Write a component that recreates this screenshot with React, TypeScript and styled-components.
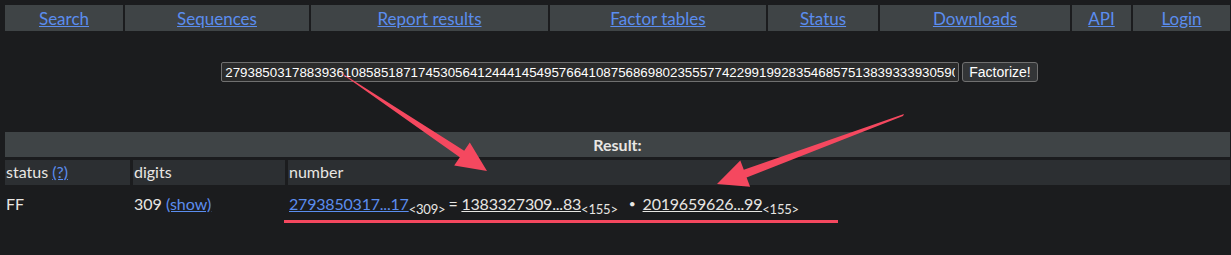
import styled, { createGlobalStyle } from "styled-components";

const Global = createGlobalStyle`
  html, body {
    margin: 0;
    background: #1b1c1e;
    color: #e8e6e3;
    font-family: Lato, "Noto Sans", sans-serif;
    font-size: 16px;
  }
`;

const Page = styled.div`
  position: relative;
  width: 1231px;
  height: 255px;
  padding: 5px 1px 0 5px;
  box-sizing: border-box;
`;

const Nav = styled.nav`
  display: grid;
  grid-template-columns: 118px 184px 237px 216px 110px 190px 59px 97px;
  column-gap: 2px;
  height: 26px;
  font-size: 17px;
`;

const NavCell = styled.div`
  background: #3f4446;
  display: flex;
  align-items: center;
  justify-content: center;
`;

const Link = styled.a<{ $plain?: boolean }>`
  color: ${(p) => (p.$plain ? "#e8e6e3" : "#5b8def")};
  text-decoration: underline;
  cursor: pointer;
`;

const Form = styled.form`
  display: flex;
  justify-content: center;
  align-items: center;
  gap: 3px;
  margin-top: 31px;
  padding-left: 24px;
`;

const NumberInput = styled.input`
  width: 738px;
  height: 20px;
  box-sizing: border-box;
  background: #2b2b2b;
  border: 1px solid #707070;
  border-radius: 2px;
  color: #fff;
  font-family: "Liberation Sans", Arial, sans-serif;
  font-size: 13.33px;
  padding: 0 3px;
  outline: none;
`;

const Button = styled.button`
  height: 20px;
  box-sizing: border-box;
  background: #333537;
  border: 1px solid #707070;
  border-radius: 3px;
  color: #fff;
  font-family: "Liberation Sans", Arial, sans-serif;
  font-size: 14px;
  padding: 0 6px;
`;

const Result = styled.div`
  margin-top: 50px;
  display: flex;
  flex-direction: column;
  gap: 3px;
`;

const Title = styled.div`
  background: #3f4446;
  height: 25px;
  display: flex;
  align-items: center;
  justify-content: center;
  font-weight: bold;
`;

const Row = styled.div`
  display: grid;
  grid-template-columns: 125px 152px 1fr;
  column-gap: 3px;
  height: 25px;
`;

const Cell = styled.div<{ $head?: boolean }>`
  background: ${(p) => (p.$head ? "#2c2f32" : "transparent")};
  display: flex;
  align-items: center;
  padding-left: 1px;
  white-space: pre;
  padding-top: ${(p) => (p.$head ? "0" : "5px")};
  padding-bottom: ${(p) => (p.$head ? "3px" : "0")};
`;

const Factors = styled.span`
  letter-spacing: -0.2px;
`;

const Sub = styled.sub`
  font-size: 13px;
  vertical-align: -4px;
  line-height: 0;
  margin-right: 3px;
`;

const Dot = styled.span`
  font-size: 12px;
  vertical-align: 2px;
  margin: 0 7px 0 8px;
`;

const Marks = styled.svg`
  position: absolute;
  left: 0;
  top: 0;
  pointer-events: none;
`;

const navItems = [
  "Search",
  "Sequences",
  "Report results",
  "Factor tables",
  "Status",
  "Downloads",
  "API",
  "Login",
];

const number =
  "2793850317883936108585187174530564124441454957664108756869802355577422991992835468575138393339305901";

export default function App() {
  return (
    <Page>
      <Global />
      <Nav>
        {navItems.map((label) => (
          <NavCell key={label}>
            <Link>{label}</Link>
          </NavCell>
        ))}
      </Nav>
      <Form onSubmit={(e) => e.preventDefault()}>
        <NumberInput defaultValue={number} />
        <Button>Factorize!</Button>
      </Form>
      <Result>
        <Title>Result:</Title>
        <Row>
          <Cell $head>
            <span>
              status <Link>(?)</Link>
            </span>
          </Cell>
          <Cell $head>digits</Cell>
          <Cell $head>number</Cell>
        </Row>
        <Row>
          <Cell>FF</Cell>
          <Cell>
            <span>
              309 <Link>(show)</Link>
            </span>
          </Cell>
          <Cell>
            <Factors>
              <Link>2793850317...17</Link>
              <Sub>&lt;309&gt;</Sub>={" "}
              <Link $plain>1383327309...83</Link>
              <Sub>&lt;155&gt;</Sub>
              <Dot>•</Dot>
              <Link $plain>2019659626...99</Link>
              <Sub>&lt;155&gt;</Sub>
            </Factors>
          </Cell>
        </Row>
      </Result>
      <Marks width="1231" height="255" viewBox="0 0 1231 255">
        <g fill="#f5485f">
          <polygon points="340,72 342,74 459.8,157.3 454.2,165.6 487,171 469.8,142.4 464.2,150.7" />
          <polygon points="904,114 903,116 746.6,177.4 750.1,186.7 717,184 740.3,160.5 743.8,169.8" />
          <rect x="284" y="220" width="554" height="3" />
        </g>
      </Marks>
    </Page>
  );
}
